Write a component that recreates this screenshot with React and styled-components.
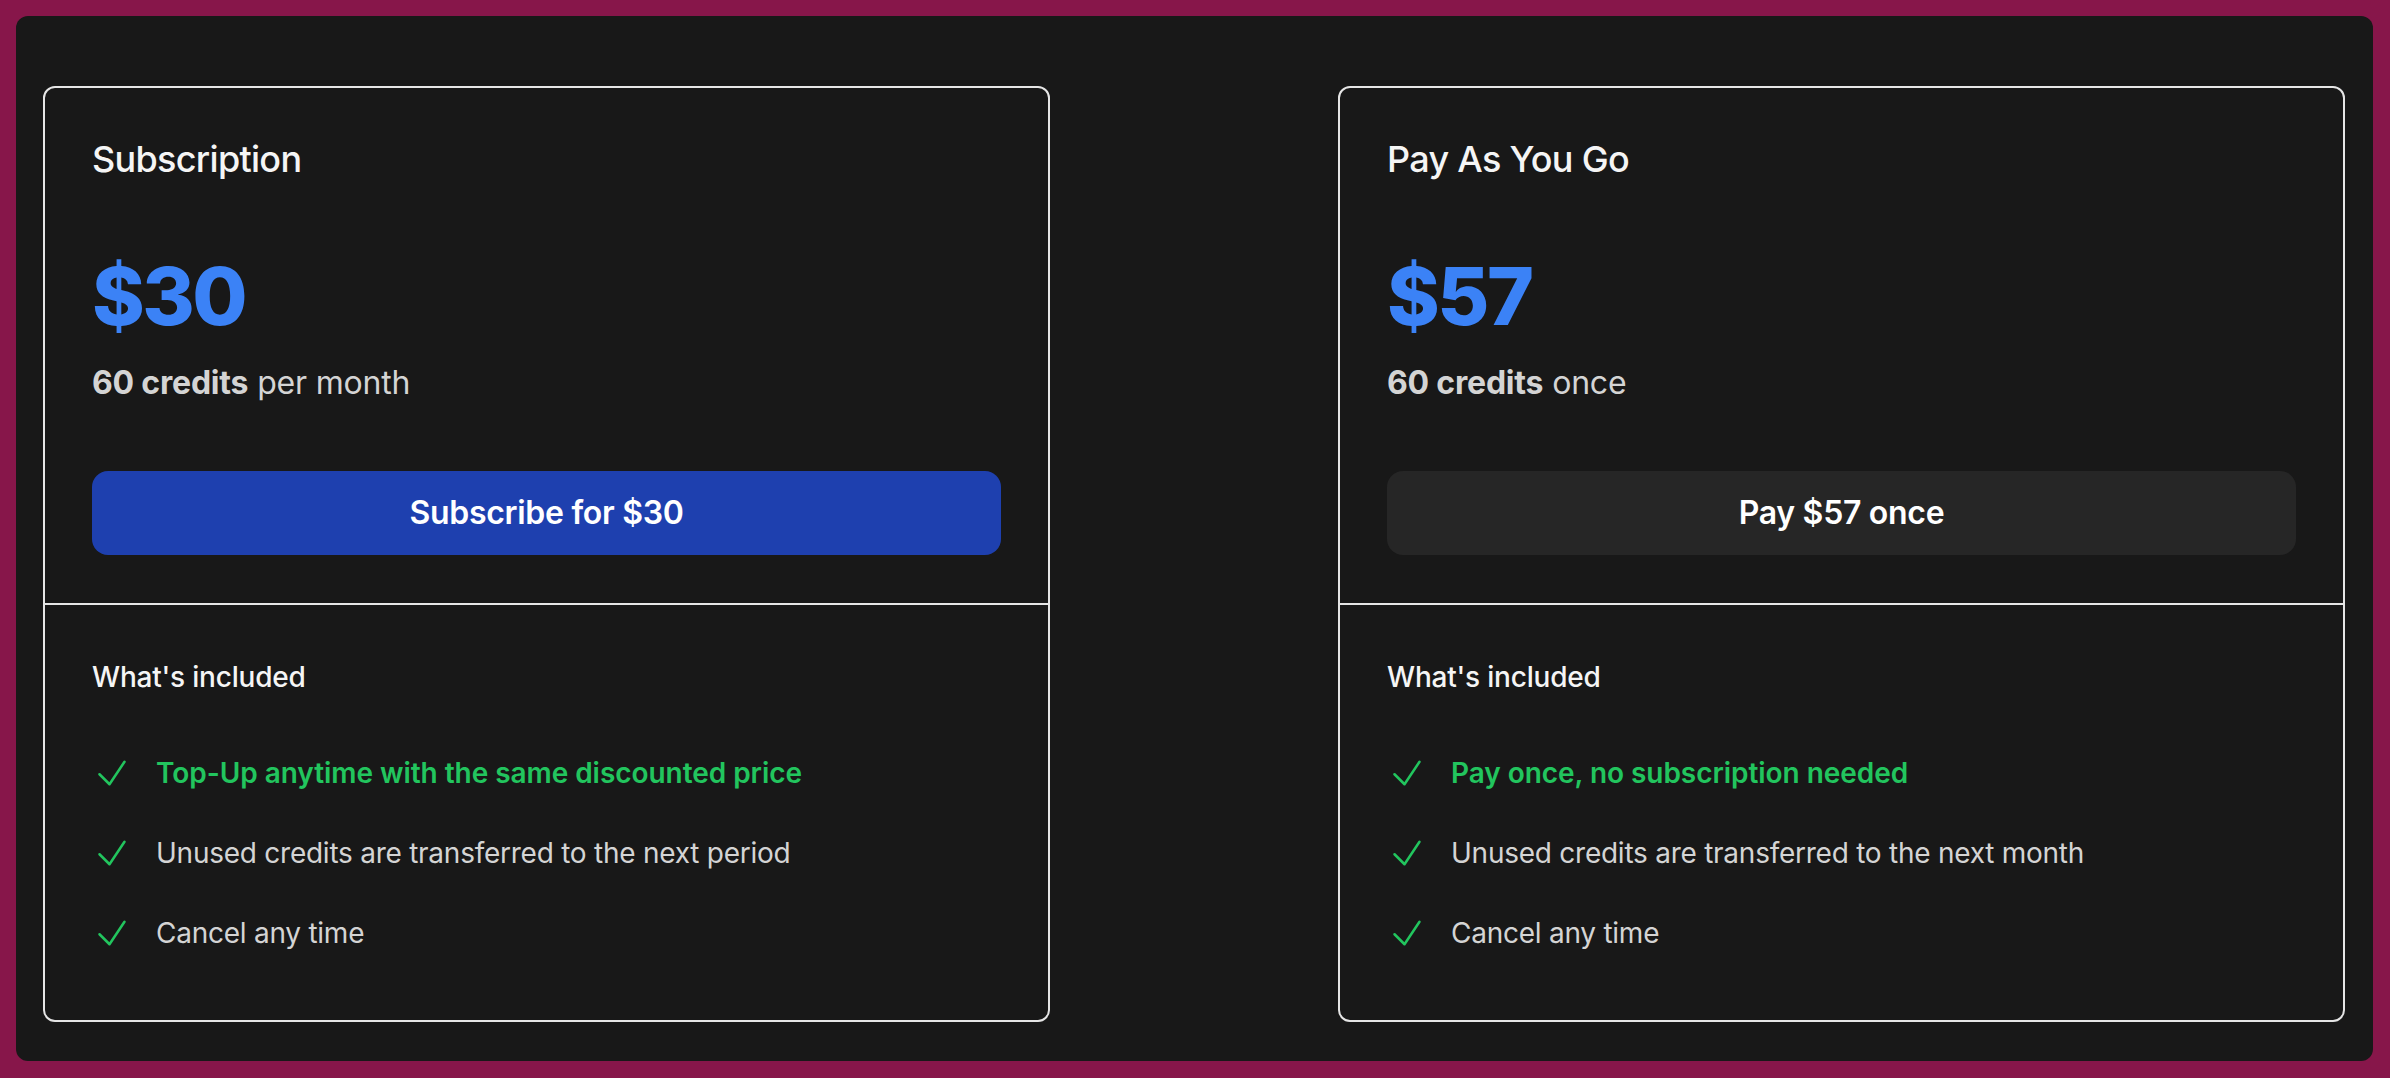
import React from "react";
import styled, { createGlobalStyle } from "styled-components";

const GlobalStyle = createGlobalStyle`
  html, body {
    margin: 0;
    padding: 0;
    background: #87164a;
  }
  body {
    font-family: "Inter", "Noto Sans", sans-serif;
    -webkit-font-smoothing: antialiased;
  }
  * {
    box-sizing: border-box;
  }
`;

const Page = styled.div`
  padding: 16px 17px 17px 16px;
`;

const Panel = styled.div`
  background: #181818;
  border-radius: 12px;
  padding: 70px 28px 39px 27px;
  display: grid;
  grid-template-columns: 1007px 1007px;
  justify-content: space-between;
`;

const Card = styled.div`
  border: 2px solid #e5e5e5;
  border-radius: 12px;
  display: flex;
  flex-direction: column;
`;

const Top = styled.div`
  padding: 47px 47px 48px;
  border-bottom: 2px solid #e5e5e5;
`;

const Title = styled.h2`
  margin: 0;
  font-size: 36px;
  line-height: 48px;
  font-weight: 500;
  letter-spacing: -0.7px;
  color: #f5f5f5;
`;

const Price = styled.div`
  margin-top: 73px;
  font-size: 80px;
  line-height: 80px;
  font-weight: 800;
  color: #3b82f6;
  letter-spacing: -2.5px;
`;

const Credits = styled.p`
  margin: 23px 0 0;
  font-size: 32px;
  line-height: 48px;
  color: #d4d4d4;
  letter-spacing: -0.2px;
  strong {
    font-weight: 700;
  }
`;

const Button = styled.button`
  margin-top: 64px;
  width: 100%;
  height: 84px;
  border: 0;
  border-radius: 16px;
  background: ${(p) => (p.$primary ? "#1e40af" : "#262626")};
  color: #ffffff;
  font-family: inherit;
  font-size: 32px;
  line-height: 48px;
  font-weight: 600;
  letter-spacing: -0.3px;
  cursor: pointer;
`;

const Bottom = styled.div`
  padding: 52px 47px 67px;
`;

const Included = styled.h3`
  margin: 0;
  font-size: 28px;
  line-height: 40px;
  font-weight: 500;
  letter-spacing: -0.2px;
  color: #f5f5f5;
`;

const List = styled.ul`
  list-style: none;
  margin: 56px 0 0;
  padding: 0;
  display: flex;
  flex-direction: column;
  gap: 40px;
`;

const Item = styled.li`
  display: flex;
  align-items: flex-start;
  gap: 24px;
  font-size: 28px;
  line-height: 40px;
  letter-spacing: ${(p) => (p.$highlight ? "-0.05px" : "-0.25px")};
  color: ${(p) => (p.$highlight ? "#22c55e" : "#d4d4d4")};
  font-weight: ${(p) => (p.$highlight ? 600 : 400)};
`;

const CheckIcon = styled.svg`
  flex: none;
  width: 40px;
  height: 40px;
  color: #22c55e;
`;

const Check = () => (
  <CheckIcon viewBox="0 0 24 24" fill="none" stroke="currentColor" strokeWidth="1.5">
    <path strokeLinecap="round" strokeLinejoin="round" d="M4.5 12.75l6 6 9-13.5" />
  </CheckIcon>
);

const plans = [
  {
    title: "Subscription",
    price: "$30",
    period: "per month",
    cta: "Subscribe for $30",
    primary: true,
    features: [
      "Top-Up anytime with the same discounted price",
      "Unused credits are transferred to the next period",
      "Cancel any time",
    ],
  },
  {
    title: "Pay As You Go",
    price: "$57",
    period: "once",
    cta: "Pay $57 once",
    primary: false,
    features: [
      "Pay once, no subscription needed",
      "Unused credits are transferred to the next month",
      "Cancel any time",
    ],
  },
];

const PlanCard = ({ plan }) => (
  <Card>
    <Top>
      <Title>{plan.title}</Title>
      <Price>{plan.price}</Price>
      <Credits>
        <strong>60 credits</strong> {plan.period}
      </Credits>
      <Button $primary={plan.primary}>{plan.cta}</Button>
    </Top>
    <Bottom>
      <Included>What's included</Included>
      <List>
        {plan.features.map((f, i) => (
          <Item key={f} $highlight={i === 0}>
            <Check />
            <span>{f}</span>
          </Item>
        ))}
      </List>
    </Bottom>
  </Card>
);

export default function App() {
  return (
    <Page>
      <GlobalStyle />
      <Panel>
        {plans.map((p) => (
          <PlanCard key={p.title} plan={p} />
        ))}
      </Panel>
    </Page>
  );
}
